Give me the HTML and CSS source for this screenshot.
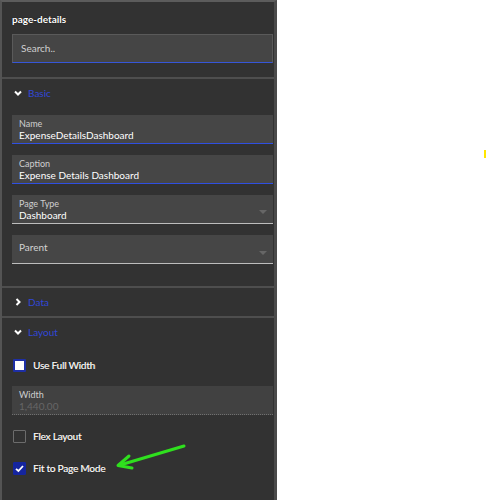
FILE: index.html
```html
<!DOCTYPE html>
<html lang="en">
<head>
    <meta charset="utf-8">
    <meta name="viewport" content="width=device-width, initial-scale=1.0">
    <title>page-details</title>
    <link rel="stylesheet" href="styles.css">
</head>
<body>
    <div id="panel">
        <div class="panel-header">
            <div class="panel-title">page-details</div>
            <div class="search-box">Search..</div>
        </div>

        <div class="section">
            <div class="section-header">
                <svg class="chevron" width="8" height="6" viewBox="0 0 8 6"><path d="M1 1.5 L4 4.5 L7 1.5" /></svg>
                <span>Basic</span>
            </div>
            <div class="section-body">
                <div class="field active">
                    <div class="field-label">Name</div>
                    <div class="field-value">ExpenseDetailsDashboard</div>
                </div>
                <div class="field active">
                    <div class="field-label">Caption</div>
                    <div class="field-value">Expense Details Dashboard</div>
                </div>
                <div class="field select">
                    <div class="field-label">Page Type</div>
                    <div class="field-value">Dashboard</div>
                    <span class="caret"></span>
                </div>
                <div class="field select empty">
                    <div class="field-placeholder">Parent</div>
                    <span class="caret"></span>
                </div>
            </div>
        </div>

        <div class="section collapsed">
            <div class="section-header">
                <svg class="chevron" width="8" height="8" viewBox="0 0 8 8"><path d="M2.5 1 L5.5 4 L2.5 7" /></svg>
                <span>Data</span>
            </div>
        </div>

        <div class="section">
            <div class="section-header">
                <svg class="chevron" width="8" height="6" viewBox="0 0 8 6"><path d="M1 1.5 L4 4.5 L7 1.5" /></svg>
                <span>Layout</span>
            </div>
            <div class="section-body layout-body">
                <label class="check-row">
                    <span class="check-box focus"></span>
                    <span class="check-label">Use Full Width</span>
                </label>
                <div class="field disabled">
                    <div class="field-label">Width</div>
                    <div class="field-value">1,440.00</div>
                </div>
                <label class="check-row">
                    <span class="check-box"></span>
                    <span class="check-label">Flex Layout</span>
                </label>
                <label class="check-row">
                    <span class="check-box checked">
                        <svg width="11" height="11" viewBox="0 0 11 11"><path d="M2 5.8 L4.4 8 L9 3" /></svg>
                    </span>
                    <span class="check-label">Fit to Page Mode</span>
                </label>
            </div>
        </div>

        <!-- pointer drawn over the panel -->
        <svg class="callout" width="90" height="40" viewBox="0 0 90 40">
            <path d="M70 2 L6 21" />
            <path d="M15 12 L4 21.5 L18 24" />
        </svg>
    </div>
    <span class="cursor-mark"></span>
</body>
</html>
```

FILE: styles.css
```css
* {
    box-sizing: border-box;
}

body {
    margin: 0;
    padding: 0;
    background-color: #ffffff;
    font-family: Lato, "Liberation Sans", sans-serif;
    color: #f2f2f2;
    overflow: hidden;
}

#panel {
    position: relative;
    width: 277px;
    height: 500px;
    background-color: #323232;
    border-top: 2px solid #5c5c5c;
    border-left: 2px solid #545454;
    border-right: 3px solid #4a4a4a;
}

.panel-header {
    padding: 10px 1px 14px 10px;
}

.panel-title {
    font-size: 10px;
    line-height: 14px;
    font-weight: 700;
    color: #ffffff;
    text-shadow: 0 0 1px #000;
    margin-bottom: 8px;
}

.search-box {
    height: 29px;
    background-color: #454545;
    border: 1px solid #5a5a5a;
    border-bottom: 1px solid #3656d8;
    padding-left: 8px;
    font-size: 10px;
    line-height: 27px;
    color: #d0d0d0;
}

.section {
    border-top: 2px solid #4e4e4e;
}

.section-header {
    height: 28px;
    display: flex;
    align-items: center;
    gap: 6px;
    padding-left: 12px;
    padding-bottom: 1px;
    font-size: 10px;
    color: #3147d8;
}

.chevron {
    fill: none;
    stroke: #ffffff;
    stroke-width: 2;
}

.section-body {
    display: flex;
    flex-direction: column;
    gap: 11px;
    padding: 8px 1px 22px 10px;
}

.field {
    position: relative;
    height: 29px;
    background-color: #464646;
    border-bottom: 1px solid #bdbdbd;
    padding: 3px 7px 0;
}

.field.active {
    border-bottom-color: #2f4fe2;
}

.field-label {
    font-size: 9px;
    line-height: 11px;
    color: #cfcfcf;
}

.field-value {
    font-size: 10px;
    line-height: 13px;
    color: #ffffff;
}

.field-placeholder {
    font-size: 10px;
    line-height: 18px;
    color: #d2d2d2;
}

.caret {
    position: absolute;
    right: 6px;
    top: 15px;
    border-left: 4px solid transparent;
    border-right: 4px solid transparent;
    border-top: 4px solid #666666;
}

.field.empty .caret {
    top: 16px;
}

.field.disabled {
    height: 29px;
    background-color: #414141;
    border-bottom: 1px dotted #707070;
}

.field.disabled .field-value {
    color: #666666;
}

.layout-body {
    gap: 10px;
    padding-top: 8px;
}

.check-row {
    display: flex;
    align-items: center;
    gap: 7px;
    height: 22px;
    padding-left: 1px;
}

.check-box {
    display: flex;
    align-items: center;
    justify-content: center;
    width: 13px;
    height: 13px;
    border: 1px solid #6c6c6c;
    border-radius: 1px;
}

.check-box.focus {
    background-color: #ffffff;
    border: 2px solid #1e2fa6;
}

.check-box.checked {
    background-color: #15259f;
    border-color: #15259f;
}

.check-box svg {
    fill: none;
    stroke: #ffffff;
    stroke-width: 1.8;
}

.check-label {
    font-size: 10px;
    font-weight: 400;
    letter-spacing: -0.2px;
    color: #ffffff;
    text-shadow: 0 0 1px #000, 0.3px 0 0 #fff;
}

.callout {
    position: absolute;
    left: 112px;
    top: 442px;
    fill: none;
    stroke: #2fe01e;
    stroke-width: 3;
    stroke-linecap: round;
    stroke-linejoin: round;
}

.cursor-mark {
    position: absolute;
    left: 484px;
    top: 150px;
    width: 2px;
    height: 8px;
    background-color: #ffe600;
}
```
